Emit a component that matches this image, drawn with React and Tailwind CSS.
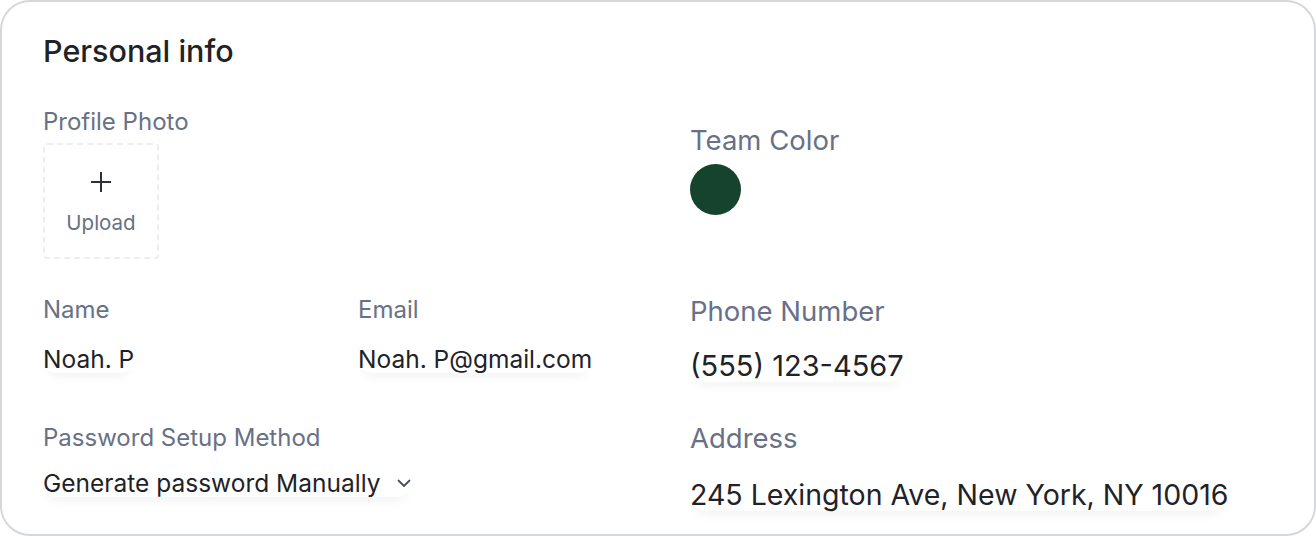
import React from "react";

const valueShadow = "rounded-full shadow-[0_8px_12px_-6px_rgba(15,23,42,0.07)]";

const Field = ({ label, value }) => (
  <div className="flex flex-col">
    <span className="text-[24px] leading-[24px] text-[#687186]">{label}</span>
    <span className={`mt-[23px] self-start text-[24.5px] leading-[28px] text-[#1f2328] ${valueShadow}`}>
      {value}
    </span>
  </div>
);

const App = () => {
  return (
    <div className="bg-white w-[1316px] h-[536px]" style={{ fontFamily: "Inter, 'Noto Sans', sans-serif" }}>
      <div className="h-[536px] w-full bg-white border-2 border-[#d5d7db] rounded-[30px] pt-[33px] pl-[41px] flex">
        {/* left side */}
        <div className="w-[647px] flex flex-col">
          <h1 className="text-[30.5px] leading-[32px] font-medium text-[#1f2328]">Personal info</h1>

          <span className="mt-[43px] text-[24px] leading-[24px] text-[#687186]">Profile Photo</span>
          <button className="mt-[9px] w-[116px] h-[116px] border-2 border-dashed border-[#eceef0] rounded-[4px] flex flex-col items-center">
            <svg width="22" height="22" viewBox="0 0 22 22" className="mt-[26px]">
              <path d="M11 1v20M1 11h20" stroke="#2d3038" strokeWidth="2" />
            </svg>
            <span className="mt-[18px] text-[20.5px] leading-[24px] text-[#687186]">Upload</span>
          </button>

          <div className="mt-[39px] grid grid-cols-[315px_1fr]">
            <Field label="Name" value="Noah. P" />
            <Field label="Email" value="Noah. P@gmail.com" />
          </div>

          <span className="mt-[53px] text-[24px] leading-[24px] text-[#687186]">Password Setup Method</span>
          <div className={`mt-[19px] self-start flex items-center gap-[16px] text-[24.5px] leading-[28px] text-[#1f2328] ${valueShadow}`}>
            <span>Generate password Manually</span>
            <svg width="14" height="9" viewBox="0 0 14 9" fill="none">
              <path d="M1.5 1.5l5.5 5.5 5.5-5.5" stroke="#4b5060" strokeWidth="1.8" strokeLinecap="round" strokeLinejoin="round" />
            </svg>
          </div>
        </div>

        {/* right side */}
        <div className="flex-1 flex flex-col">
          <span className="mt-[91px] text-[27.5px] leading-[28px] text-[#687186]">Team Color</span>
          <div className="mt-[10px] w-[51px] h-[51px] rounded-full bg-[#16432e]" />

          <span className="mt-[82px] text-[27.5px] leading-[28px] text-[#687186]">Phone Number</span>
          <span className={`mt-[25px] self-start text-[29px] leading-[32px] text-[#1f2328] ${valueShadow}`}>(555) 123-4567</span>

          <span className="mt-[42px] text-[27.5px] leading-[28px] text-[#687186]">Address</span>
          <span className={`mt-[27px] self-start text-[28.5px] leading-[32px] text-[#1f2328] ${valueShadow}`}>
            245 Lexington Ave, New York, NY 10016
          </span>
        </div>
      </div>
    </div>
  );
};

export default App;
